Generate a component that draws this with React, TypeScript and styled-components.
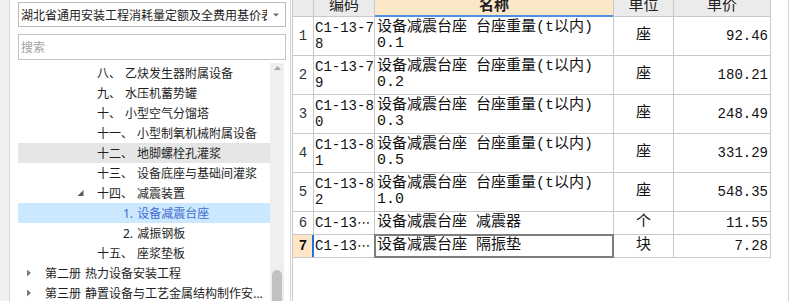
import styled, { createGlobalStyle } from 'styled-components'

const GlobalStyle = createGlobalStyle`
  html, body {
    margin: 0;
    padding: 0;
    background: #fff;
  }
  body {
    width: 790px;
    height: 301px;
    overflow: hidden;
  }
`

const Screen = styled.div`
  display: flex;
  width: 790px;
  height: 301px;
  overflow: hidden;
  background: #fff;
`

const SideStrip = styled.div`
  flex: 0 0 9px;
  background: #f0f0f0;
  border-right: 1px solid #d6d6d6;
`

const LeftPanel = styled.div`
  flex: 0 0 281px;
  width: 281px;
  min-width: 0;
  box-sizing: border-box;
  display: flex;
  flex-direction: column;
  padding: 2px 4px 0 8px;
  border-right: 1px solid #d4d4d4;
  font-family: 'Noto Sans', 'Noto Sans CJK SC', sans-serif;
  font-size: 12px;
  color: #1e1e1e;
  min-height: 0;
  overflow: hidden;
`

const Select = styled.div`
  flex: 0 0 25px;
  box-sizing: border-box;
  display: flex;
  align-items: center;
  gap: 6px;
  min-width: 0;
  padding: 0 6px 0 2px;
  border: 1px solid #bdbdbd;
  background: #fff;
`

const SelectText = styled.span`
  flex: 1;
  min-width: 0;
  overflow: hidden;
  white-space: nowrap;
  color: #222;
`

const Search = styled.input`
  flex: 0 0 26px;
  box-sizing: border-box;
  width: 100%;
  margin: 7px 0 0;
  padding: 0 2px;
  border: 1px solid #c4c4c4;
  outline: none;
  font: inherit;
  color: #222;

  &::placeholder {
    color: #a2a2a2;
  }
`

const Tree = styled.div`
  flex: 1;
  display: flex;
  min-height: 0;
  min-width: 0;
  margin: 3px 2px 0 0;
`

const TreeList = styled.div`
  flex: 1;
  min-width: 0;
  overflow: hidden;
`

type RowState = 'hover' | 'selected' | undefined

const TreeRow = styled.div<{ $level: number; $state?: RowState }>`
  height: 20px;
  display: flex;
  align-items: center;
  padding-left: ${p => 9 + p.$level * 26}px;
  padding-right: 4px;
  background: ${p =>
    p.$state === 'selected' ? '#cce8ff' : p.$state === 'hover' ? '#e6e6e6' : 'transparent'};
  color: ${p => (p.$state === 'selected' ? '#3d6bd0' : '#1e1e1e')};
`

const Expander = styled.span`
  flex: 0 0 18px;
  display: flex;
  align-items: center;

  svg {
    margin-left: -3px;
  }
`

const TreeLabel = styled.span`
  flex: 1;
  min-width: 0;
  overflow: hidden;
  white-space: nowrap;
  text-overflow: ellipsis;
  word-spacing: 1px;
`

const Scrollbar = styled.div`
  flex: 0 0 14px;
  display: flex;
  flex-direction: column;
  align-items: center;
  overflow: hidden;
  background: #efefef;
`

const ScrollArrow = styled.svg`
  margin-top: 3px;
`

const ScrollThumb = styled.div`
  margin-top: auto;
  margin-bottom: -10px;
  width: 10px;
  height: 41px;
  border-radius: 5px;
  background: #c2c2c2;
`

const TablePane = styled.div`
  flex: 0 0 497px;
  box-sizing: border-box;
  margin-left: 1px;
  border-left: 1px solid #c8c8c8;
  border-right: 1px solid #d2d2d2;
  overflow: hidden;
  font-family: 'Liberation Mono', 'Noto Sans CJK SC', monospace;
  color: #111;
`

const Grid = styled.div`
  display: grid;
  grid-template-columns: 20px 60px 238px 59px 96px;
  grid-template-rows: 20px repeat(5, 38px) repeat(2, 22px);
  gap: 1px;
  width: max-content;
  padding: 0 1px 1px 0;
  margin-top: -4px;
  background: #c9c9c9;
`

const HeaderCell = styled.div<{ $active?: boolean }>`
  display: flex;
  justify-content: center;
  align-items: flex-start;
  line-height: 16px;
  font-size: 15px;
  font-family: 'Noto Sans CJK SC', sans-serif;
  font-weight: ${p => (p.$active ? 700 : 400)};
  color: #222;
  background: ${p => (p.$active ? '#fde7c9' : '#ebebeb')};
  box-shadow: ${p => (p.$active ? 'inset 0 -1px 0 #4a90e6, 0 1px 0 #4a90e6' : 'none')};
`

const Cell = styled.div`
  display: flex;
  flex-direction: column;
  justify-content: center;
  line-height: 16px;
  background: #fff;
  white-space: nowrap;
  overflow: hidden;
`

const RowNum = styled(Cell)<{ $current?: boolean }>`
  align-items: center;
  font-size: 14px;
  color: ${p => (p.$current ? '#111' : '#333')};
  font-weight: ${p => (p.$current ? 700 : 400)};
  background: ${p => (p.$current ? '#fde5c6' : '#fff')};
`

const CodeCell = styled(Cell)<{ $current?: boolean }>`
  padding-left: 1px;
  font-size: 14px;
  overflow: visible;
  box-shadow: ${p => (p.$current ? '-2px 0 0 #1f6fe6' : 'none')};
`

const Ellipsis = styled.span`
  font-family: 'DejaVu Sans', sans-serif;
  font-size: 13px;
  letter-spacing: -1px;
`

const NameCell = styled(Cell)<{ $focused?: boolean }>`
  padding-left: 2px;
  font-size: 15px;
  overflow: visible;
  outline: ${p => (p.$focused ? '2px solid #7d7d7d' : 'none')};
  outline-offset: -1px;
`

const UnitCell = styled(Cell)`
  align-items: center;
  font-size: 15px;
`

const PriceCell = styled(Cell)`
  align-items: flex-end;
  padding-right: 2px;
  font-size: 14px;
`

const Line = styled.span`
  display: block;
`

type TreeItem = {
  label: string
  level: number
  state?: RowState
  expander?: 'open' | 'closed'
}

const treeItems: TreeItem[] = [
  { label: '八、 乙炔发生器附属设备', level: 2 },
  { label: '九、 水压机蓄势罐', level: 2 },
  { label: '十、 小型空气分馏塔', level: 2 },
  { label: '十一、 小型制氧机械附属设备', level: 2 },
  { label: '十二、 地脚螺栓孔灌浆', level: 2, state: 'hover' },
  { label: '十三、 设备底座与基础间灌浆', level: 2 },
  { label: '十四、 减震装置', level: 2, expander: 'open' },
  { label: '1. 设备减震台座', level: 3, state: 'selected' },
  { label: '2. 减振钢板', level: 3 },
  { label: '十五、 座浆垫板', level: 2 },
  { label: '第二册 热力设备安装工程', level: 0, expander: 'closed' },
  { label: '第三册 静置设备与工艺金属结构制作安装工程', level: 0, expander: 'closed' },
]

type QuotaRow = {
  code: string[]
  truncated?: boolean
  name: string[]
  unit: string
  price: string
}

const rows: QuotaRow[] = [
  { code: ['C1-13-7', '8'], name: ['设备减震台座 台座重量(t以内)', '0.1'], unit: '座', price: '92.46' },
  { code: ['C1-13-7', '9'], name: ['设备减震台座 台座重量(t以内)', '0.2'], unit: '座', price: '180.21' },
  { code: ['C1-13-8', '0'], name: ['设备减震台座 台座重量(t以内)', '0.3'], unit: '座', price: '248.49' },
  { code: ['C1-13-8', '1'], name: ['设备减震台座 台座重量(t以内)', '0.5'], unit: '座', price: '331.29' },
  { code: ['C1-13-8', '2'], name: ['设备减震台座 台座重量(t以内)', '1.0'], unit: '座', price: '548.35' },
  { code: ['C1-13'], truncated: true, name: ['设备减震台座 减震器'], unit: '个', price: '11.55' },
  { code: ['C1-13'], truncated: true, name: ['设备减震台座 隔振垫'], unit: '块', price: '7.28' },
]

const currentRow = 6

const ExpandedIcon = () => (
  <svg width="8" height="8" viewBox="0 0 8 8">
    <polygon points="1.5,7 7.5,7 7.5,1" fill="#595959" />
  </svg>
)

const CollapsedIcon = () => (
  <svg width="8" height="8" viewBox="0 0 8 8">
    <polygon points="3,0.5 7,4 3,7.5" fill="#7a7a7a" />
  </svg>
)

export default function App() {
  return (
    <>
      <GlobalStyle />
      <Screen>
        <SideStrip />
        <LeftPanel>
          <Select>
            <SelectText>湖北省通用安装工程消耗量定额及全费用基价表</SelectText>
            <svg width="6" height="4" viewBox="0 0 6 4">
              <polygon points="0,0.5 6,0.5 3,3.5" fill="#6a6a6a" />
            </svg>
          </Select>
          <Search placeholder="搜索" />
          <Tree>
            <TreeList>
              {treeItems.map(item => (
                <TreeRow key={item.label} $level={item.level} $state={item.state}>
                  <Expander>
                    {item.expander === 'open' && <ExpandedIcon />}
                    {item.expander === 'closed' && <CollapsedIcon />}
                  </Expander>
                  <TreeLabel>{item.label}</TreeLabel>
                </TreeRow>
              ))}
            </TreeList>
            <Scrollbar>
              <ScrollArrow width="7" height="4" viewBox="0 0 7 4">
                <polygon points="0,4 7,4 3.5,0" fill="#a6a6a6" />
              </ScrollArrow>
              <ScrollThumb />
            </Scrollbar>
          </Tree>
        </LeftPanel>
        <TablePane>
          <Grid>
            <HeaderCell />
            <HeaderCell>编码</HeaderCell>
            <HeaderCell $active>名称</HeaderCell>
            <HeaderCell>单位</HeaderCell>
            <HeaderCell>单价</HeaderCell>
            {rows.map((row, i) => {
              const current = i === currentRow
              return [
                <RowNum key={`n${i}`} $current={current}>
                  {i + 1}
                </RowNum>,
                <CodeCell key={`c${i}`} $current={current}>
                  {row.code.map(line => (
                    <Line key={line}>
                      {line}
                      {row.truncated && <Ellipsis>⋯</Ellipsis>}
                    </Line>
                  ))}
                </CodeCell>,
                <NameCell key={`m${i}`} $focused={current}>
                  {row.name.map(line => (
                    <Line key={line}>{line}</Line>
                  ))}
                </NameCell>,
                <UnitCell key={`u${i}`}>{row.unit}</UnitCell>,
                <PriceCell key={`p${i}`}>{row.price}</PriceCell>,
              ]
            })}
          </Grid>
        </TablePane>
      </Screen>
    </>
  )
}
